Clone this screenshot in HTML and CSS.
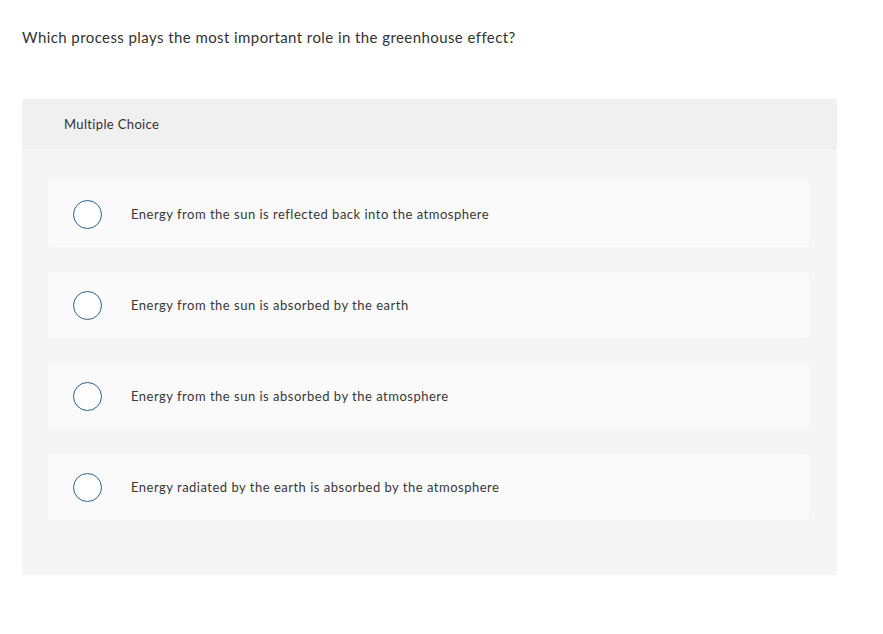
FILE: index.html
```html
<!DOCTYPE html>
<html>
<head>
<meta charset="utf-8">
<link rel="stylesheet" href="styles.css">
</head>
<body>
<div class="page">
  <p class="question">Which process plays the most important role in the greenhouse effect?</p>
  <div class="panel">
    <div class="panel-head">Multiple Choice</div>
    <div class="panel-body">
      <div class="option"><span class="radio"></span><span class="label">Energy from the sun is reflected back into the atmosphere</span></div>
      <div class="option"><span class="radio"></span><span class="label">Energy from the sun is absorbed by the earth</span></div>
      <div class="option"><span class="radio"></span><span class="label">Energy from the sun is absorbed by the atmosphere</span></div>
      <div class="option"><span class="radio"></span><span class="label">Energy radiated by the earth is absorbed by the atmosphere</span></div>
    </div>
  </div>
</div>
</body>
</html>
```
FILE: styles.css
```css
* { box-sizing: border-box; }
html, body { margin: 0; padding: 0; background: #fff; }
body { font-family: Lato, "Liberation Sans", sans-serif; color: #333; letter-spacing: 0.42px; }
.page { padding: 28px 46px 0 22px; width: 883px; }
.question { margin: 0; font-size: 15px; line-height: 18px; color: #333; }
.panel { margin-top: 53px; width: 815px; background: #f5f5f5; border-radius: 3px; overflow: hidden; }
.panel-head { height: 50px; background: #f0f0f0; padding-left: 42px; display: flex; align-items: center; font-size: 13px; color: #333; letter-spacing: 0.35px; }
.panel-body { padding: 32px 28px 55px 26px; display: flex; flex-direction: column; gap: 25px; }
.option { height: 66px; background: #fafafa; border-radius: 3px; display: flex; align-items: center; padding-left: 25px; }
.radio { width: 29px; height: 29px; border: 1.5px solid #2c5f91; border-radius: 50%; background: #fff; flex: none; }
.label { margin-left: 29px; font-size: 13px; color: #383838; letter-spacing: 0.5px; }
```
